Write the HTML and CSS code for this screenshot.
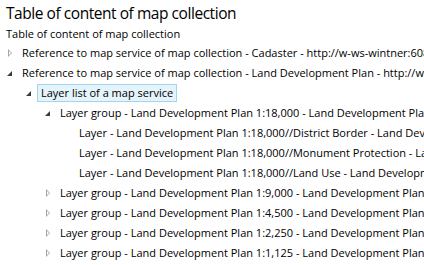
FILE: index.html
```html
<!DOCTYPE html>
<html lang="en">
<head>
    <meta charset="UTF-8">
    <title>Table of content of map collection</title>
    <link rel="stylesheet" href="styles.css">
</head>
<body>
<div class="page">
    <h1 class="title">Table of content of map collection</h1>
    <div class="caption">Table of content of map collection</div>
    <ul class="tree">
        <li>
            <div class="row"><span class="toggle closed"></span><span class="label">Reference to map service of map collection - Cadaster - http://w-ws-wintner:6080/arcgis/rest/services/Cadaster/MapServer</span></div>
        </li>
        <li>
            <div class="row"><span class="toggle open"></span><span class="label">Reference to map service of map collection - Land Development Plan - http://w-ws-wintner:6080/arcgis/rest/services/LDP/MapServer</span></div>
            <ul>
                <li>
                    <div class="row"><span class="toggle open"></span><span class="label selected">Layer list of a map service</span></div>
                    <ul>
                        <li>
                            <div class="row"><span class="toggle open"></span><span class="label">Layer group - Land Development Plan 1:18,000 - Land Development Plan</span></div>
                            <ul>
                                <li><div class="row"><span class="toggle"></span><span class="label">Layer - Land Development Plan 1:18,000//District Border - Land Development Plan</span></div></li>
                                <li><div class="row"><span class="toggle"></span><span class="label">Layer - Land Development Plan 1:18,000//Monument Protection - Land Development Plan</span></div></li>
                                <li><div class="row"><span class="toggle"></span><span class="label">Layer - Land Development Plan 1:18,000//Land Use - Land Development Plan</span></div></li>
                            </ul>
                        </li>
                        <li><div class="row"><span class="toggle closed"></span><span class="label">Layer group - Land Development Plan 1:9,000 - Land Development Plan</span></div></li>
                        <li><div class="row"><span class="toggle closed"></span><span class="label">Layer group - Land Development Plan 1:4,500 - Land Development Plan</span></div></li>
                        <li><div class="row"><span class="toggle closed"></span><span class="label">Layer group - Land Development Plan 1:2,250 - Land Development Plan</span></div></li>
                        <li><div class="row"><span class="toggle closed"></span><span class="label">Layer group - Land Development Plan 1:1,125 - Land Development Plan</span></div></li>
                    </ul>
                </li>
            </ul>
        </li>
    </ul>
</div>
</body>
</html>
```

FILE: styles.css
```css
html, body {
    margin: 0;
    background-color: #ffffff;
    overflow: hidden;
}

div.page {
    width: 424px;
    height: 265px;
    overflow: hidden;
    font-family: "Open Sans", "Noto Sans", sans-serif;
    color: #000000;
}

h1.title {
    margin: 0;
    padding: 2px 0 0 6px;
    font-size: 15.5px;
    font-weight: normal;
    letter-spacing: -0.45px;
    line-height: 22px;
    white-space: nowrap;
}

div.caption {
    padding: 0 0 0 6px;
    font-size: 11px;
    line-height: 19px;
    white-space: nowrap;
}

ul.tree, ul.tree ul {
    list-style: none;
    margin: 0;
    padding: 0;
}

ul.tree ul {
    padding-left: 19px;
}

div.row {
    display: flex;
    align-items: center;
    height: 20px;
    white-space: nowrap;
}

span.toggle {
    flex: none;
    width: 18px;
    height: 20px;
    position: relative;
}

span.toggle.closed::before {
    content: "";
    position: absolute;
    left: 8px;
    top: 6px;
    border-style: solid;
    border-width: 4px 0 4px 4px;
    border-color: transparent transparent transparent #a6a6a6;
}

span.toggle.closed::after {
    content: "";
    position: absolute;
    left: 9px;
    top: 8px;
    border-style: solid;
    border-width: 2px 0 2px 2px;
    border-color: transparent transparent transparent #ffffff;
}

span.toggle.open::before {
    content: "";
    position: absolute;
    left: 7px;
    top: 8px;
    border-style: solid;
    border-width: 0 0 5px 5px;
    border-color: transparent transparent #3c3c3c transparent;
}

span.label {
    padding: 0 3px;
    border: 1px solid transparent;
    font-size: 11px;
    line-height: 16px;
}

span.label.selected {
    background-color: #e5f3fb;
    border-color: #9fd7f3;
}
```
